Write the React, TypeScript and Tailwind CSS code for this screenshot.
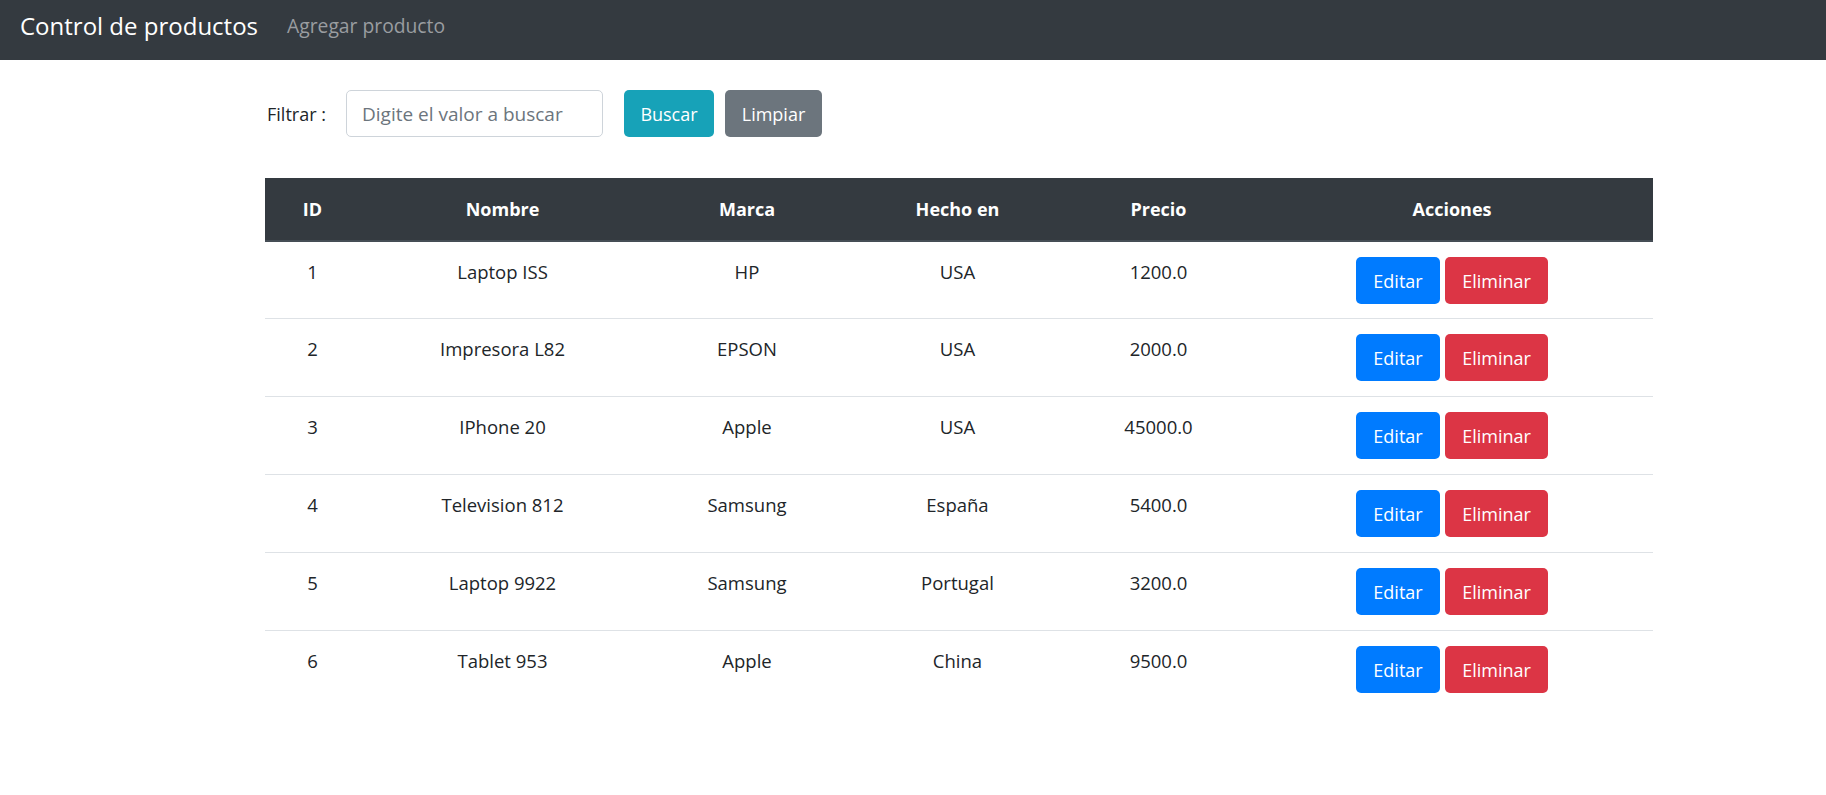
import React from "react";

interface Producto {
  id: number;
  nombre: string;
  marca: string;
  hechoEn: string;
  precio: string;
}

const productos: Producto[] = [
  { id: 1, nombre: "Laptop ISS", marca: "HP", hechoEn: "USA", precio: "1200.0" },
  { id: 2, nombre: "Impresora L82", marca: "EPSON", hechoEn: "USA", precio: "2000.0" },
  { id: 3, nombre: "IPhone 20", marca: "Apple", hechoEn: "USA", precio: "45000.0" },
  { id: 4, nombre: "Television 812", marca: "Samsung", hechoEn: "España", precio: "5400.0" },
  { id: 5, nombre: "Laptop 9922", marca: "Samsung", hechoEn: "Portugal", precio: "3200.0" },
  { id: 6, nombre: "Tablet 953", marca: "Apple", hechoEn: "China", precio: "9500.0" },
];

const columnas = ["ID", "Nombre", "Marca", "Hecho en", "Precio", "Acciones"];

// same column widths for header and rows
const gridCols = "grid grid-cols-[95px_285px_204px_217px_185px_402px]";

export default function App() {
  return (
    <div
      className="min-h-screen bg-white text-[#212529] text-[18px] leading-[30px]"
      style={{ fontFamily: '"Open Sans", "Noto Sans", sans-serif' }}
    >
      {/* Navbar */}
      <nav className="h-[60px] bg-[#343a40] flex items-center pl-[20px] pb-[8px] gap-[29px]">
        <span className="text-[24px] text-white leading-[34px]">Control de productos</span>
        <a className="text-[19.3px] text-[#9a9da0] leading-[34px]">Agregar producto</a>
      </nav>

      <div className="pl-[265px]">
        {/* Filter row */}
        <div className="pt-[30px] flex items-center h-[77px]">
          <label className="w-[81px] shrink-0 pl-[2px]">Filtrar :</label>
          <input
            type="text"
            placeholder="Digite el valor a buscar"
            className="w-[257px] h-[47px] border border-[#ced4da] rounded-[5px] px-[15px] text-[19px] placeholder:text-[#6c757d] outline-none"
          />
          <button className="ml-[21px] w-[90px] h-[47px] rounded-[5px] bg-[#17a2b8] text-white">
            Buscar
          </button>
          <button className="ml-[11px] w-[97px] h-[47px] rounded-[5px] bg-[#6c757d] text-white">
            Limpiar
          </button>
        </div>

        {/* Table */}
        <div className="mt-[41px] w-[1388px]">
          <div className={`${gridCols} h-[64px] bg-[#343a40] border-b-2 border-[#454d55]`}>
            {columnas.map((col) => (
              <div key={col} className="flex items-center justify-center font-bold text-white">
                {col}
              </div>
            ))}
          </div>

          {productos.map((p, i) => (
            <div
              key={p.id}
              className={`${gridCols} text-center text-[18.5px] ${
                i === 0 ? "h-[76px]" : "h-[78px] border-t border-[#dee2e6]"
              }`}
            >
              <div className="pt-[15px]">{p.id}</div>
              <div className="pt-[15px]">{p.nombre}</div>
              <div className="pt-[15px]">{p.marca}</div>
              <div className="pt-[15px]">{p.hechoEn}</div>
              <div className="pt-[15px]">{p.precio}</div>
              <div className="pt-[15px] flex justify-center gap-[5px] text-[18px]">
                <button className="w-[84px] h-[47px] rounded-[5px] bg-[#007bff] text-white">
                  Editar
                </button>
                <button className="w-[103px] h-[47px] rounded-[5px] bg-[#dc3545] text-white">
                  Eliminar
                </button>
              </div>
            </div>
          ))}
        </div>
      </div>
    </div>
  );
}
